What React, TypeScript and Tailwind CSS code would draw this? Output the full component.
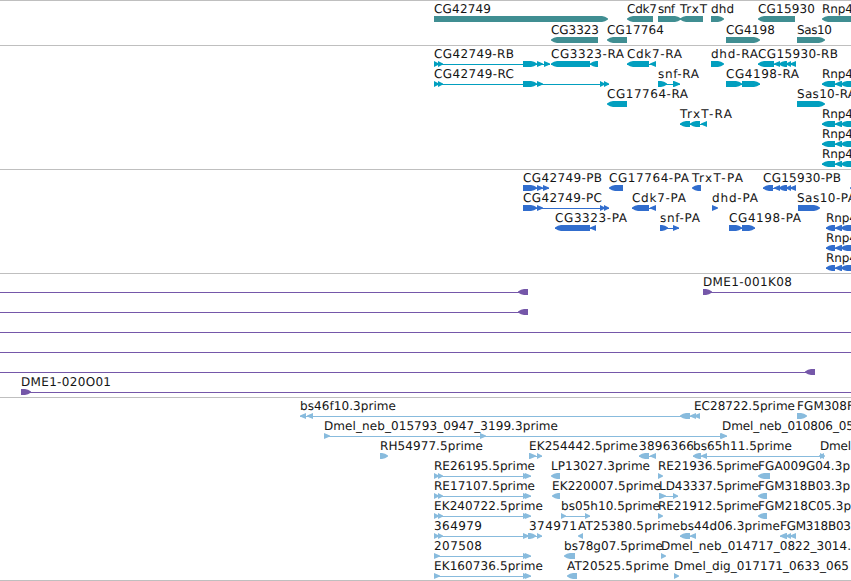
type Strand = 'fwd' | 'rev';

interface Feature {
  label?: string;
  // label start and advance width, in px
  at?: number;
  width?: number;
  strand?: Strand;
  exons?: number[][];
  // connecting line, defaults to the span of the exons
  span?: number[];
}

interface TrackData {
  name: string;
  color: string;
  tall?: boolean;
  rows: Feature[][];
}

const VIEW_WIDTH = 851;

function feature(label: string, at: number, end: number, strand: Strand, exons: number[][], span?: number[]): Feature {
  return { label, at, width: end - at, strand, exons, span };
}

const rnp4 = (at: number, exonEnd: number) =>
  feature('Rnp4', at, at + 31, 'rev', [[at, exonEnd], [exonEnd, 842], [841, 852], [850, 860]]);

const estExons = [[434, 439], [438, 443], [523, 529], [525, 531]];

const tracks: TrackData[] = [
  {
    name: 'Genes',
    color: '#408e92',
    tall: true,
    rows: [
      [
        feature('CG42749', 434, 491, 'fwd', [[434, 608]]),
        feature('Cdk7', 627, 657, 'rev', [[627, 653]]),
        feature('snf', 658, 675, 'fwd', [[658, 681]]),
        feature('TrxT', 680, 707, 'rev', [[680, 703]]),
        feature('dhd', 711, 734, 'fwd', [[711, 724]]),
        feature('CG15930', 758, 815, 'rev', [[758, 795]]),
        feature('Rnp4', 822, 853, 'rev', [[822, 860]]),
      ],
      [
        feature('CG3323', 551, 599, 'rev', [[551, 598]]),
        feature('CG17764', 607, 664, 'rev', [[607, 627]]),
        feature('CG4198', 726, 775, 'fwd', [[726, 760]]),
        feature('Sas10', 797, 832, 'fwd', [[797, 825]]),
      ],
    ],
  },
  {
    name: 'Transcripts',
    color: '#029fbf',
    rows: [
      [
        feature('CG42749-RB', 434, 514, 'fwd', [[434, 439], [438, 443], [523, 537], [537, 543], [544, 550]]),
        feature('CG3323-RA', 551, 624, 'rev', [[551, 590], [590, 598]]),
        feature('Cdk7-RA', 627, 682, 'rev', [[627, 649], [650, 656]]),
        feature('dhd-RA', 711, 758, 'fwd', [[711, 724]]),
        feature('CG15930-RB', 758, 838, 'rev', [[758, 774], [774, 780], [779, 787], [786, 791], [790, 796]]),
      ],
      [
        feature('CG42749-RC', 434, 514, 'fwd', [[434, 439], [438, 443], [523, 537], [537, 543], [600, 605], [604, 609]]),
        feature('snf-RA', 658, 699, 'fwd', [[658, 667], [673, 680]]),
        feature('CG4198-RA', 726, 799, 'fwd', [[726, 742], [742, 760]]),
        rnp4(822, 835),
      ],
      [
        feature('CG17764-RA', 607, 688, 'rev', [[607, 627]]),
        feature('Sas10-RA', 797, 856, 'fwd', [[797, 825]]),
      ],
      [feature('TrxT-RA', 680, 732, 'rev', [[680, 690], [690, 700], [701, 707]]), rnp4(822, 835)],
      [rnp4(822, 835)],
      [rnp4(822, 835)],
    ],
  },
  {
    name: 'Proteins',
    color: '#316dcd',
    rows: [
      [
        feature('CG42749-PB', 523, 602, 'fwd', [[523, 537], [537, 543], [543, 549]]),
        feature('CG17764-PA', 609, 689, 'rev', [[609, 623]]),
        feature('TrxT-PA', 692, 743, 'rev', [[692, 701]]),
        feature('CG15930-PB', 763, 841, 'rev', [[763, 773], [774, 780], [779, 787], [786, 791], [790, 796]]),
        { strand: 'rev', exons: [[850, 860]] },
      ],
      [
        feature('CG42749-PC', 523, 602, 'fwd', [[523, 537], [537, 543], [600, 605], [604, 609]]),
        feature('Cdk7-PA', 632, 686, 'rev', [[632, 649], [650, 656]]),
        feature('dhd-PA', 712, 758, 'fwd', [[712, 718]]),
        feature('Sas10-PA', 797, 856, 'fwd', [[798, 820]]),
      ],
      [
        feature('CG3323-PA', 555, 627, 'rev', [[555, 590], [590, 596]]),
        feature('snf-PA', 660, 700, 'fwd', [[660, 668], [673, 679]]),
        feature('CG4198-PA', 729, 801, 'fwd', [[729, 742], [742, 755]]),
        rnp4(826, 835),
      ],
      [rnp4(826, 835)],
      [rnp4(826, 835)],
    ],
  },
  {
    name: 'Clones',
    color: '#7557a9',
    rows: [
      [
        { strand: 'rev', exons: [[518, 528]], span: [0, 528] },
        feature('DME1-001K08', 703, 792, 'fwd', [[703, 712]], [703, VIEW_WIDTH]),
      ],
      [{ strand: 'rev', exons: [[518, 528]], span: [0, 528] }],
      [{ span: [0, VIEW_WIDTH] }],
      [{ span: [0, VIEW_WIDTH] }],
      [{ strand: 'rev', exons: [[805, 815]], span: [0, 815] }],
      [feature('DME1-020O01', 21, 111, 'fwd', [[21, 31]], [21, VIEW_WIDTH])],
    ],
  },
  {
    name: 'ESTs',
    color: '#88bbdd',
    rows: [
      [
        feature('bs46f10.3prime', 300, 396, 'rev', [[300, 306], [307, 313], [680, 690]]),
        feature('EC28722.5prime', 694, 795, 'rev', [[690, 696], [694, 700]]),
        feature('FGM308F', 797, 854, 'fwd', [[797, 807]]),
      ],
      [
        feature('Dmel_neb_015793_0947_3199.3prime', 324, 558, 'fwd', [[324, 330], [480, 486], [720, 725], [721, 727]]),
        feature('Dmel_neb_010806_05', 722, 854, 'fwd', []),
      ],
      [
        feature('RH54977.5prime', 380, 483, 'fwd', [[380, 388]]),
        feature('EK254442.5prime', 529, 638, 'fwd', [[529, 536], [537, 542]]),
        feature('3896366', 639, 694, 'rev', [[639, 649], [650, 656]]),
        feature('bs65h11.5prime', 693, 792, 'rev', [[693, 701], [701, 707], [819, 824]]),
        feature('Dmel', 820, 851, 'fwd', [[820, 825]]),
      ],
      [
        feature('RE26195.5prime', 434, 535, 'fwd', estExons),
        feature('LP13027.3prime', 551, 650, 'rev', [[551, 560]]),
        feature('RE21936.5prime', 658, 759, 'fwd', [[658, 663]]),
        feature('FGA009G04.3p', 758, 850, 'rev', [[758, 770]]),
      ],
      [
        feature('RE17107.5prime', 434, 535, 'fwd', estExons),
        feature('EK220007.5prime', 552, 661, 'rev', [[552, 560]]),
        feature('LD43337.5prime', 659, 759, 'fwd', [[659, 666], [673, 678]]),
        feature('FGM318B03.3p', 758, 850, 'rev', [[758, 767]]),
      ],
      [
        feature('EK240722.5prime', 434, 543, 'fwd', estExons),
        feature('bs05h10.5prime', 561, 660, 'fwd', [[561, 566], [585, 590]]),
        feature('RE21912.5prime', 658, 759, 'fwd', [[658, 663]]),
        feature('FGM218C05.3p', 758, 851, 'rev', [[758, 767]]),
      ],
      [
        feature('364979', 434, 482, 'fwd', [[434, 439], [438, 443], [523, 529], [528, 536], [537, 542]]),
        feature('374971', 529, 577, 'fwd', []),
        feature('AT25380.5prime', 578, 680, 'rev', [[578, 583]]),
        feature('bs44d06.3prime', 680, 780, 'rev', [[680, 690], [690, 696]]),
        feature('FGM318B03', 780, 851, 'rev', [[780, 787], [786, 791], [790, 796]]),
      ],
      [
        feature('207508', 434, 482, 'fwd', [[434, 440], [523, 529], [525, 531]]),
        feature('bs78g07.5prime', 564, 663, 'rev', [[564, 575]]),
        feature('Dmel_neb_014717_0822_3014.', 661, 851, 'fwd', [[661, 666]]),
      ],
      [
        feature('EK160736.5prime', 434, 543, 'fwd', [[434, 440], [523, 529], [525, 531]]),
        feature('AT20525.5prime', 567, 669, 'rev', [[567, 577]]),
        feature('Dmel_dig_017171_0633_065', 674, 849, 'fwd', [[674, 679]]),
      ],
    ],
  },
];

// blunt at the tail, tapering to the middle of the bar at the head
function exonPoints(start: number, end: number, strand: Strand) {
  const size = end - start;
  const head = Math.min(6, size);
  const shoulder = size > 7 ? 0.5 : 0;
  const tip = strand === 'fwd' ? end : start;
  const tail = strand === 'fwd' ? start : end;
  const dir = strand === 'fwd' ? -1 : 1;
  const neck = tip + dir * head;
  const mid = tip + dir * head * 0.5;
  return [
    `${tail},15`,
    `${neck},15`,
    `${mid},${16.2 - shoulder}`,
    `${tip},17.6`,
    `${tip},18.6`,
    `${mid},${19.8 + shoulder}`,
    `${neck},21`,
    `${tail},21`,
  ].join(' ');
}

function FeatureGlyph({ item, color }: { item: Feature; color: string }) {
  const exons = item.exons ?? [];
  const span = item.span ?? (exons.length > 1 ? [exons[0][0], exons[exons.length - 1][1]] : null);

  return (
    <g>
      {span && <rect x={span[0]} y={18} width={span[1] - span[0]} height={1} fill={color} />}
      {exons.map(([start, end]) => (
        <polygon key={start} points={exonPoints(start, end, item.strand ?? 'fwd')} fill={color} />
      ))}
      {item.label && (
        <text x={item.at} y={12} textLength={item.width} fill="#141414" textRendering="geometricPrecision">
          {item.label}
        </text>
      )}
    </g>
  );
}

function Track({ track }: { track: TrackData }) {
  return (
    <section aria-label={track.name} className="shrink-0 border-t border-[#bfbfbf]">
      {track.rows.map((row, i) => (
        <svg key={i} className={`block w-[851px] overflow-visible ${track.tall ? 'h-[21px]' : 'h-5'}`}>
          {row.map((item, j) => (
            <FeatureGlyph key={j} item={item} color={track.color} />
          ))}
        </svg>
      ))}
      <div className={track.tall || track.name === 'ESTs' ? 'h-[2px]' : 'h-[3px]'} />
    </section>
  );
}

export default function App() {
  return (
    <main className="flex h-[581px] w-[851px] flex-col overflow-hidden border-b border-[#bfbfbf] bg-white font-['DejaVu_Sans',sans-serif] text-[12px]">
      {tracks.map((track) => (
        <Track key={track.name} track={track} />
      ))}
    </main>
  );
}
